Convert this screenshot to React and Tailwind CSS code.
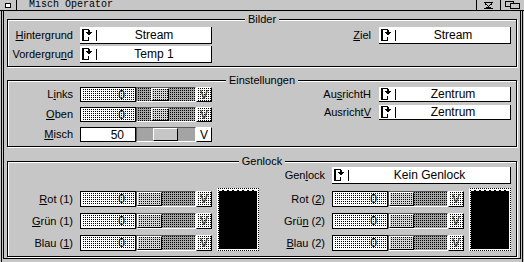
import React from "react";

const DOTS = "bg-[conic-gradient(#000_25%,transparent_0)] bg-[length:2px_2px]";

function CycleIcon() {
  return (
    <svg width="10" height="12" viewBox="0 0 10 12" shapeRendering="crispEdges" className="shrink-0">
      <rect x="0" y="0" width="7" height="1" />
      <rect x="0" y="0" width="2" height="12" />
      <rect x="0" y="11" width="7" height="1" />
      <rect x="6" y="8" width="1" height="4" />
      <rect x="6" y="1" width="2" height="2" />
      <polygon points="4,3 10,3 7,7" />
    </svg>
  );
}

function Cycle({ value, className }) {
  return (
    <div className={`flex items-center bg-white border-r border-b border-black ${className}`}>
      <div className="ml-[2px] flex items-center">
        <CycleIcon />
      </div>
      <div className="ml-[4px] w-px h-[11px] bg-black shrink-0" />
      <div className="flex-1 text-center text-[12px] leading-none whitespace-nowrap">{value}</div>
    </div>
  );
}

function Label({ children, className }) {
  return (
    <div className={`text-[11px] leading-none text-right whitespace-nowrap shrink-0 ${className}`}>{children}</div>
  );
}

function U({ children }) {
  return <span className="underline underline-offset-[1px] decoration-1">{children}</span>;
}

function NumberField({ value, disabled }) {
  if (disabled) {
    return (
      <div className="w-[56px] h-full border border-black bg-white p-[1px] shrink-0">
        <div className={`h-full bg-white ${DOTS} flex items-center justify-end pr-[9px] text-[12px] leading-none`}>
          {value}
        </div>
      </div>
    );
  }
  return (
    <div className="w-[56px] h-full border border-black bg-white flex items-center justify-end pr-[11px] text-[12px] leading-none shrink-0">
      {value}
    </div>
  );
}

function Slider({ disabled, knob }) {
  const track = disabled ? `bg-[#a4a4a4] ${DOTS}` : "bg-[#a4a4a4]";
  const knobBg = disabled ? `bg-[#d4d4d4] ${DOTS}` : "bg-[#c6c6c6]";
  return (
    <div
      className={`w-[60px] h-full border border-t-[#555] border-l-[#555] border-r-white border-b-white flex shrink-0 ${track}`}
    >
      <div
        className={`h-full border border-t-white border-l-white border-r-black border-b-black ${knobBg} ${knob}`}
      />
    </div>
  );
}

function VButton({ disabled }) {
  return (
    <div
      className={`w-[16px] h-full border border-t-white border-l-white border-r-black border-b-black flex items-center justify-center text-[12px] leading-none shrink-0 ${
        disabled ? `bg-white ${DOTS} text-[#333]` : "bg-white"
      }`}
    >
      V
    </div>
  );
}

function ColorBox() {
  return (
    <div className={`ml-[5px] w-[42px] h-[63px] bg-white ${DOTS} p-[2px] shrink-0`}>
      <div className="w-full h-full bg-black border-t border-dashed border-white" />
    </div>
  );
}

function Group({ title, className, children }) {
  return (
    <fieldset
      className={`border border-black shadow-[inset_1px_1px_0_#fff,1px_1px_0_#fff] min-w-0 ${className}`}
    >
      <legend className="mx-auto px-[3px] text-[11px] leading-[12px] bg-[#c6c6c6]">{title}</legend>
      {children}
    </fieldset>
  );
}

function ColorCol({ labels, labelW, className }) {
  return (
    <div className={`flex ${className}`}>
      <div className="flex flex-col gap-[6px] pt-[3px]">
        {labels.map((l, i) => (
          <div key={i} className="flex items-center h-[16px]">
            <Label className={labelW}>{l}</Label>
            <div className="ml-[7px] flex h-full">
              <NumberField value="0" disabled />
              <Slider disabled knob="ml-0 w-[25px]" />
              <VButton disabled />
            </div>
          </div>
        ))}
      </div>
      <ColorBox />
    </div>
  );
}

function TitleBar() {
  return (
    <div className="h-[11px] flex border-b border-black shrink-0">
      <div className="w-[17px] flex items-center justify-center border-r border-black">
        <div className="w-[6px] h-[5px] border border-black bg-white" />
      </div>
      <div className="ml-[12px] font-['Liberation_Mono',monospace] text-[10px] leading-[10px] whitespace-nowrap">
        Misch Operator
      </div>
      <div className="flex-1" />
      <div className="w-[24px] border-l border-black flex items-center justify-center">
        <svg width="9" height="7" viewBox="0 0 9 7" shapeRendering="crispEdges">
          <path d="M0 0.5H9M0 6.5H9M1 1.5L4.5 4.5L8 1.5M2 5.5H7" stroke="black" fill="none" />
        </svg>
      </div>
      <div className="w-[24px] border-l border-black flex items-center justify-center">
        <svg width="15" height="8" viewBox="0 0 15 8" shapeRendering="crispEdges">
          <rect x="0.5" y="0.5" width="8" height="5" fill="none" stroke="black" />
          <rect x="5.5" y="2.5" width="9" height="5" fill="#c6c6c6" stroke="black" />
        </svg>
      </div>
    </div>
  );
}

export default function App() {
  return (
    <div className="w-[524px] h-[262px] bg-[#c6c6c6] flex flex-col font-['Liberation_Sans',Arial,sans-serif] text-black overflow-hidden">
      <TitleBar />
      <div className="flex-1 flex flex-col mx-[1px] border-x border-black pb-[3px]">
        <div className="flex-1 flex flex-col mx-[1px] border-x border-b border-black px-[3px]">
          <Group title="Bilder" className="mt-[2px] pt-[2px] pb-[3px]">
            <div className="flex flex-col gap-[2px]">
              <div className="flex h-[17px] items-center">
                <Label className="w-[65px]">
                  <U>H</U>intergrund
                </Label>
                <Cycle className="ml-[7px] w-[132px] h-full" value="Stream" />
                <Label className="flex-1 pr-[8px]">
                  <U>Z</U>iel
                </Label>
                <Cycle className="w-[132px] h-full mr-[5px]" value="Stream" />
              </div>
              <div className="flex h-[17px] items-center">
                <Label className="w-[65px]">
                  Vordergru<U>n</U>d
                </Label>
                <Cycle className="ml-[7px] w-[132px] h-full" value="Temp 1" />
              </div>
            </div>
          </Group>

          <Group title="Einstellungen" className="mt-[7px] pt-[1px] pb-[4px]">
            <div className="flex">
              <div className="flex flex-col gap-[5px]">
                <div className="flex items-center h-[15px]">
                  <Label className="w-[65px]">
                    L<U>i</U>nks
                  </Label>
                  <div className="ml-[7px] flex h-full">
                    <NumberField value="0" disabled />
                    <Slider disabled knob="ml-[14px] w-[18px]" />
                    <VButton disabled />
                  </div>
                </div>
                <div className="flex items-center h-[15px]">
                  <Label className="w-[65px]">
                    <U>O</U>ben
                  </Label>
                  <div className="ml-[7px] flex h-full">
                    <NumberField value="0" disabled />
                    <Slider disabled knob="ml-[14px] w-[18px]" />
                    <VButton disabled />
                  </div>
                </div>
                <div className="flex items-center h-[15px]">
                  <Label className="w-[65px]">
                    <U>M</U>isch
                  </Label>
                  <div className="ml-[7px] flex h-full">
                    <NumberField value="50" />
                    <Slider knob="ml-[16px] w-[25px]" />
                    <VButton />
                  </div>
                </div>
              </div>
              <div className="flex-1 flex flex-col gap-[3px] pr-[5px]">
                <div className="flex items-center h-[15px]">
                  <Label className="flex-1 pr-[8px]">
                    Au<U>s</U>richtH
                  </Label>
                  <Cycle className="w-[132px] h-full" value="Zentrum" />
                </div>
                <div className="flex items-center h-[15px]">
                  <Label className="flex-1 pr-[8px]">
                    Ausricht<U>V</U>
                  </Label>
                  <Cycle className="w-[132px] h-full" value="Zentrum" />
                </div>
              </div>
            </div>
          </Group>

          <Group title="Genlock" className="mt-[8px] pb-[5px]">
            <div className="flex flex-col gap-[4px]">
              <div className="flex h-[17px] items-center">
                <div className="w-[254px] shrink-0" />
                <Label className="w-[63px]">
                  Gen<U>l</U>ock
                </Label>
                <Cycle className="ml-[7px] w-[179px] h-full" value="Kein Genlock" />
              </div>
              <div className="flex">
                <ColorCol
                  labelW="w-[65px]"
                  labels={[
                    <>
                      <U>R</U>ot (1)
                    </>,
                    <>
                      <U>G</U>rün (1)
                    </>,
                    <>
                      Blau (<U>1</U>)
                    </>,
                  ]}
                />
                <ColorCol
                  className="ml-[3px]"
                  labelW="w-[63px]"
                  labels={[
                    <>
                      Rot (<U>2</U>)
                    </>,
                    <>
                      Grü<U>n</U> (2)
                    </>,
                    <>
                      <U>B</U>lau (2)
                    </>,
                  ]}
                />
              </div>
            </div>
          </Group>
        </div>
      </div>
    </div>
  );
}
